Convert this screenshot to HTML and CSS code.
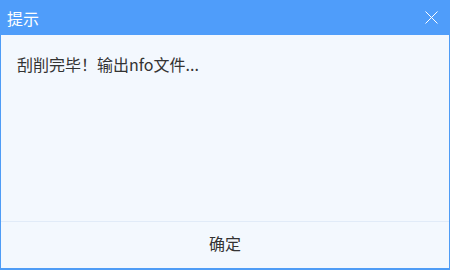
FILE: index.html
```html
<!DOCTYPE html>
<html lang="zh-CN">
<head>
<meta charset="utf-8">
<title>提示</title>
<link rel="stylesheet" href="styles.css">
</head>
<body>
<div class="dialog">
  <div class="header">
    <span class="title">提示</span>
    <button class="close" aria-label="关闭">
      <svg width="13" height="13" viewBox="0 0 13 13"><path d="M0.5 0.5 L12.5 12.5 M12.5 0.5 L0.5 12.5" stroke="#fff" stroke-width="1" fill="none"/></svg>
    </button>
  </div>
  <div class="body">
    <p class="message">刮削完毕！输出nfo文件...</p>
  </div>
  <div class="footer">
    <button class="ok">确定</button>
  </div>
</div>
</body>
</html>
```
FILE: styles.css
```css
html, body {
  margin: 0;
  padding: 0;
  width: 450px;
  height: 270px;
  overflow: hidden;
  background: #f3f8fe;
}
.dialog {
  box-sizing: border-box;
  width: 450px;
  height: 270px;
  display: flex;
  flex-direction: column;
  border: 1px solid #4e9cf6;
  border-top: none;
  border-bottom-width: 2px;
  background: #f3f8fe;
  font-family: "Noto Sans CJK SC", "Microsoft YaHei", sans-serif;
}
.header {
  height: 35px;
  flex: none;
  background: #4f9dfa;
  display: flex;
  align-items: center;
  justify-content: space-between;
  padding: 0 12px 0 7px;
  margin: 0 -1px;
}
.title {
  color: #fff;
  font-size: 16px;
  line-height: 20px;
}
.close {
  border: none;
  background: none;
  padding: 0;
  width: 13px;
  height: 13px;
  display: flex;
}
.body {
  flex: 1;
  padding: 0 16px;
}
.message {
  margin: 18px 0 0;
  font-size: 16px;
  line-height: 22px;
  color: #333;
}
.footer {
  height: 47px;
  flex: none;
  box-sizing: border-box;
  padding-bottom: 4px;
  border-top: 1px solid #e1ebf8;
  display: flex;
  align-items: center;
  justify-content: center;
}
.ok {
  border: none;
  background: none;
  font-family: inherit;
  font-size: 16px;
  color: #333;
  padding: 0;
}
```
